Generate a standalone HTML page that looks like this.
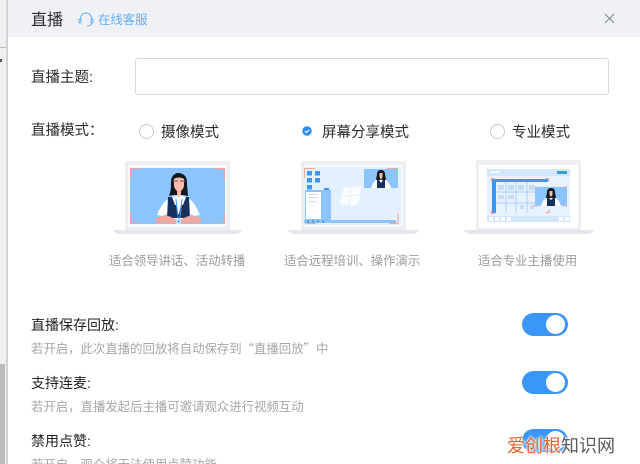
<!DOCTYPE html>
<html lang="zh-CN"><head><meta charset="utf-8">
<style>
html,body{margin:0;padding:0;background:#fff}
#p{position:relative;width:640px;height:464px;overflow:hidden;background:#fff;font-family:"Liberation Sans","Noto Sans CJK SC",sans-serif;filter:blur(.3px)}
.t{position:absolute;white-space:nowrap;line-height:20px;height:20px}
.l{color:#2b2b2b;font-size:14.5px}
.b{color:#222;font-size:14px}
.d{color:#a6a6a6;font-size:12.4px;font-family:"Noto Sans CJK SC",sans-serif}
.c{color:#9a9a9a;font-size:12.4px}
.a{position:absolute}
.tg{position:absolute;left:522px;width:46px;height:23px;border-radius:12px;background:#3a97f7}
.tg i{position:absolute;right:3px;top:2px;width:19px;height:19px;border-radius:50%;background:#fff}
.r{position:absolute;width:13px;height:13px;border:1px solid #c9c9c9;border-radius:50%;background:#fff}
</style></head><body><div id="p">
<div class="a" style="left:0;top:0;width:6px;height:464px;background:#f0f0f0"></div>
<div class="a" style="left:0;top:47px;width:6px;height:1px;background:#bbb"></div>
<div class="a" style="left:0;top:59px;width:2px;height:3px;background:#555"></div>
<div class="a" style="left:0;top:364px;width:5px;height:100px;background:#bdbdbd"></div>
<div class="a" style="left:6px;top:0;width:2px;height:464px;background:#d2d2d2"></div>
<div class="a" style="left:8px;top:0;width:632px;height:37px;background:#eff1f5"></div>
<div class="t" style="left:31px;top:11px;font-size:16px;color:#2b2b2b">直播</div>
<svg class="a" style="left:78px;top:12px" width="16" height="16" viewBox="0 0 16 16" fill="none" stroke="#62aef5" stroke-width="1"><path d="M2.500 8V6.500a5.500 5.500 0 0 1 11 0V8"/><rect x="1" y="7" width="2" height="4" rx="1"/><rect x="13" y="7" width="2" height="4" rx="1"/><path d="M13.500 11.500c-.5 1.600-2 2.500-4.500 2.500"/></svg>
<div class="t" style="left:98px;top:10px;font-size:12.4px;color:#62aef5">在线客服</div>
<svg class="a" style="left:604px;top:13px" width="11" height="11" fill="none" stroke="#7d8590" stroke-width="1"><path d="M1 1l9 9M10 1l-9 9"/></svg>
<div class="t l" style="left:31px;top:68px">直播主题:</div>
<div class="a" style="left:135px;top:58px;width:472px;height:35px;border:1px solid #d9d9d9;border-radius:3px"></div>
<div class="t l" style="left:31px;top:121px">直播模式：</div>
<div class="r" style="left:139px;top:124px"></div>
<div class="t l" style="left:161px;top:123px">摄像模式</div>
<svg class="a" style="left:302px;top:126px" width="10" height="10"><circle cx="5" cy="5" r="4.700" fill="#2d8cf0"/><path d="M2.800 5l1.600 1.600 2.800-2.800" fill="none" stroke="#fff" stroke-width="1.100"/></svg>
<div class="t l" style="left:322px;top:123px">屏幕分享模式</div>
<div class="r" style="left:490px;top:124px"></div>
<div class="t l" style="left:512px;top:123px">专业模式</div>

<svg class="a" style="left:0;top:0" width="640" height="464">
<!-- laptop 1 -->
<path d="M125 230V163a2 2 0 0 1 2-2h101a2 2 0 0 1 2 2v67z" fill="#eceef2"/>
<path d="M113 230h129c-1 2-3 4-7 4H120c-4 0-6-2-7-4z" fill="#e2e6ec"/>
<rect x="128" y="165" width="99" height="62" fill="#f7f8fa"/>
<rect x="130" y="168" width="95" height="56" fill="#8cc4ff"/>
<path d="M130.500 179v-10.500H141M214 168.500h10.500V179M224.500 213v10.500H214M141 223.500h-10.500V213" fill="none" stroke="#f3a79e" stroke-width="1"/>
<!-- hair -->
<path d="M178 173c6 0 9 4 9 9 0 6 1 10 1 14l-5-1h-10l-4 1c2-5 2-9 2-14 0-5 3-9 7-9z" fill="#14181f"/>
<!-- shirt -->
<path d="M172 197l7-2 7 2c6 2 10 9 14 18l-6 1-3-2v6h-24v-6l-4 2-6-1c4-9 8-16 15-18z" fill="#fff"/>
<!-- vest -->
<path d="M168 197h4l3 8h1l2 9h1l2-9h2l3-8h3l1 21h-23z" fill="#16325c"/>
<!-- neck/face -->
<path d="M174 179c2-2 8-2 10 0l0 6c0 3-2 5-3 6v3l-2 4-2-4v-3c-1-1-3-3-3-6z" fill="#f7bcae"/>
<path d="M173 181h5M180 181h5" stroke="#a85a50" stroke-width="1.200"/>
<path d="M176 199l2 19h2l2-19" fill="none" stroke="#3a97f7" stroke-width="1"/>
<path d="M156 218l9-3 6 2 6 3v3h-21zM201 218l-9-3-6 2-6 3v3h21z" fill="#f4a9a0"/>
<rect x="176" y="219" width="5" height="5" fill="#cfe6ff"/><rect x="177.500" y="220.500" width="2" height="2" fill="#3a97f7"/>
<!-- laptop 2 -->
<path d="M301 230V163a2 2 0 0 1 2-2h101a2 2 0 0 1 2 2v67z" fill="#eceef2"/>
<path d="M288 230h131c-1 2-3 4-7 4H295c-4 0-6-2-7-4z" fill="#e2e6ec"/>
<rect x="304" y="165" width="99" height="62" fill="#f7f8fa"/>
<rect x="304" y="167" width="97" height="58" fill="#e3f0fe"/>
<rect x="364" y="169" width="34" height="19" fill="#8cc4ff"/>
<path d="M381 170c3 0 4 2 4 4s1 4 1 6h-10c0-2 1-4 1-6s1-4 4-4z" fill="#14181f"/>
<path d="M379.500 173h3v4l-1.500 3-1.500-3z" fill="#f7bcae"/>
<path d="M376 180l-3 3-2 5h20l-2-5-3-3z" fill="#fff"/>
<path d="M377 180h2l2 3 2-3h2v8h-8z" fill="#16325c"/>
<path d="M304.500 178v-9.500H315M387 168.500h10.500V177M398 213v10.500h-9M316 223.500h-10.500V213" fill="none" stroke="#f3a79e" stroke-width="1"/>
<g fill="#fff" opacity=".9"><path d="M344 187c3 1 5 1 8 0l-2 8c-3 1-5 1-8 0z"/><path d="M353 186c3 1 6 1 9-1l-2 9c-3 1-5 1-9 1z"/><path d="M342 196c3 1 5 1 8 0l-2 8c-3 1-6 1-8 0z"/><path d="M351 196c3 0 6 0 9-1l-2 9c-3 2-6 2-9 1z"/></g>
<g fill="#3a97f7"><rect x="307" y="171" width="5" height="4.500"/><rect x="315" y="171" width="5" height="4.500"/><rect x="307" y="178" width="5" height="4.500"/><rect x="315" y="178" width="5" height="4.500"/><rect x="307" y="185" width="5" height="4.500"/><rect x="324" y="188" width="5" height="4.500"/></g>
<rect x="305" y="190" width="26" height="31" fill="#8cc4ff"/>
<rect x="306" y="192" width="15" height="27" fill="#fff"/>
<g fill="#c6dcf5"><rect x="308" y="194" width="11" height="1"/><rect x="308" y="197" width="10" height="1"/><rect x="308" y="201" width="8" height="1"/></g>
<rect x="304" y="220" width="92" height="3" fill="#8cc4ff"/>
<g fill="#3a97f7"><rect x="307" y="220.500" width="2" height="2"/><rect x="312" y="220.500" width="2" height="2"/><rect x="317" y="220.500" width="2" height="2"/><rect x="322" y="220.500" width="2" height="2"/></g>
<!-- laptop 3 -->
<path d="M476 230V162a2 2 0 0 1 2-2h101a2 2 0 0 1 2 2v68z" fill="#eceef2"/>
<path d="M464 230h130c-1 2-3 4-7 4H471c-4 0-6-2-7-4z" fill="#e2e6ec"/>
<rect x="479" y="165" width="99" height="63" fill="#fff"/>
<rect x="487" y="169" width="83" height="53" fill="#e8f2fe"/>
<rect x="487" y="169" width="83" height="7" fill="#d3e7fc"/>
<rect x="490" y="171.500" width="10" height="1.500" fill="#fff"/><rect x="557" y="171" width="10" height="3" fill="#3a97f7"/>
<rect x="492" y="179" width="4" height="34" fill="#3a97f7"/>
<rect x="496" y="179" width="52" height="3" fill="#3a97f7"/>
<g stroke="#8cc4ff" stroke-width=".7"><path d="M496 192h40M496 203h40M506 182v31M516 182v31M527 182v31"/></g>
<g fill="#c6dcf5"><rect x="498" y="185" width="6" height="5"/><rect x="508" y="185" width="6" height="5"/><rect x="518" y="185" width="6" height="5"/><rect x="529" y="185" width="5" height="5"/><rect x="498" y="195" width="6" height="4"/><rect x="508" y="195" width="6" height="4"/><rect x="520" y="205" width="4" height="4"/><rect x="530" y="205" width="4" height="4"/></g>
<rect x="535" y="187" width="32" height="19" fill="#8cc4ff"/>
<path d="M551 188c3 0 4 2 4 4s1 4 1 6h-10c0-2 1-4 1-6s1-4 4-4z" fill="#14181f"/>
<path d="M549.500 191h3v4l-1.500 2-1.500-2z" fill="#f7bcae"/>
<path d="M546 198l-3 3-2 5h20l-2-5-3-3z" fill="#fff"/>
<path d="M547 198h2l2 2 2-2h2v8h-8z" fill="#16325c"/>
<path d="M491.500 182v-3.500h3M545 178.500h3.500v3M491.500 210v3.500h3M534 187h3M564 187h3M534 206h3M564 206h3M546 212.500h3v-3" fill="none" stroke="#f3a79e" stroke-width="1.200"/>
<rect x="487" y="216" width="83" height="6" fill="#d3e7fc"/>
<g fill="#fff"><rect x="489" y="217" width="4" height="4"/><rect x="495" y="217" width="4" height="4"/><rect x="501" y="217" width="4" height="4"/><rect x="507" y="217" width="4" height="4"/><rect x="559" y="217" width="4" height="4"/><rect x="565" y="217" width="4" height="4"/></g>
</svg>

<div class="t c" style="left:109px;top:251px">适合领导讲话、活动转播</div>
<div class="t c" style="left:284px;top:251px">适合远程培训、操作演示</div>
<div class="t c" style="left:478px;top:251px">适合专业主播使用</div>

<div class="t b" style="left:31px;top:315px">直播保存回放:</div>
<div class="t d" style="left:31px;top:338px">若开启，此次直播的回放将自动保存到“直播回放”中</div>
<div class="tg" style="top:313px"><i></i></div>
<div class="t b" style="left:31px;top:373px">支持连麦:</div>
<div class="t d" style="left:31px;top:396px">若开启，直播发起后主播可邀请观众进行视频互动</div>
<div class="tg" style="top:371px"><i></i></div>
<div class="t b" style="left:31px;top:431px">禁用点赞:</div>
<div class="t d" style="left:31px;top:454px">若开启，观众将无法使用点赞功能</div>
<div class="tg" style="top:429px"><i></i></div>
<div class="t" style="left:507px;top:436px;font-size:18px;color:#e0672a;text-shadow:0 0 2px #fff,0 0 2px #fff,0 0 3px #fff">爱创根<span style="color:#5a5a5a">知识网</span></div>
</div></body></html>
